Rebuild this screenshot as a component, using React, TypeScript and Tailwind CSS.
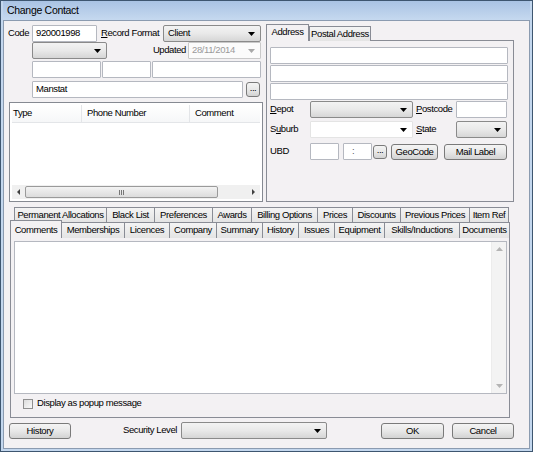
import React from "react";

type P = { className?: string; children?: React.ReactNode };

function Arrow({ color = "#000000" }: { color?: string }) {
  return (
    <svg width="7" height="4" viewBox="0 0 7 4" className="shrink-0">
      <path d="M0 0h7L3.5 4z" fill={color} />
    </svg>
  );
}

function TextBox({ className = "", children }: P) {
  return (
    <div className={`flex h-[17px] items-center rounded-[1px] border border-[#b5b8c0] bg-white ${className}`}>
      {children}
    </div>
  );
}

function Combo({ className = "", children }: P) {
  return (
    <div
      className={`flex h-[17px] items-center justify-between rounded-[2px] border border-[#8a8a8a] bg-linear-to-b from-[#f3f3f3] via-[#e9e9e9] to-[#d6d6d6] pl-[4px] pr-[5px] ${className}`}
    >
      <span>{children}</span>
      <Arrow />
    </div>
  );
}

function Btn({ className = "", children }: P) {
  return (
    <div
      className={`flex items-center justify-center rounded-[3px] border border-[#7a7a7a] bg-linear-to-b from-[#f4f4f4] via-[#e8e8e8] to-[#d3d3d3] leading-none ${className}`}
    >
      {children}
    </div>
  );
}

function Tab({ className = "", children }: P) {
  return (
    <div
      className={`flex shrink-0 items-center justify-center border-t border-l border-[#898c95] bg-linear-to-b from-[#f4f4f4] to-[#e4e4e4] ${className}`}
    >
      {children}
    </div>
  );
}

export default function App() {
  return (
    <div className="flex h-[452px] w-[533px] flex-col whitespace-nowrap border border-[#3e5670] bg-[#c3d7ee] px-[2px] pb-[2px] font-['Liberation_Sans',Arial,sans-serif] text-[9.5px] tracking-[-0.4px] text-black">
      {/* title bar */}
      <div className="flex h-[19px] items-center bg-linear-to-b from-[#a9c3e4] to-[#c6d9ef] pl-[4px] text-[10.5px] tracking-[-0.3px]">
        Change Contact
      </div>

      <div className="flex flex-1 flex-col border border-[#8b9bb0] bg-[#f3f1f3] px-[4px] pt-[3px]">
        {/* top section */}
        <div className="flex">
          {/* left column */}
          <div className="flex w-[255px] flex-col pt-[1px]">
            <div className="flex h-[17px] items-center">
              <span className="w-[24px]">Code</span>
              <TextBox className="w-[65px] pl-[3px]">920001998</TextBox>
              <span className="ml-[4px] w-[62px]">
                <span className="underline">R</span>ecord Format
              </span>
              <Combo className="w-[98px]">Client</Combo>
            </div>

            <div className="flex h-[17px] w-[253px] items-center">
              <Combo className="ml-[24px] w-[75px]" />
              <span className="ml-auto mr-[2px]">Updated</span>
              <div className="flex h-[17px] w-[73px] items-center justify-between rounded-[1px] border border-[#c9c9c9] bg-[#fbfbfb] pl-[3px] pr-[5px] text-[#9a9a9a]">
                <span>28/11/2014</span>
                <Arrow color="#a8a8a8" />
              </div>
            </div>

            <div className="mt-[2px] flex h-[17px]">
              <TextBox className="ml-[24px] w-[69px]" />
              <TextBox className="ml-[1px] w-[49px]" />
              <TextBox className="ml-[1px] w-[109px]" />
            </div>

            <div className="mt-[3px] flex h-[17px] items-center">
              <TextBox className="ml-[24px] w-[211px] pl-[3px]">Manstat</TextBox>
              <Btn className="ml-[3px] h-[15px] w-[14px] pb-[3px]">...</Btn>
            </div>

            {/* phone list */}
            <div className="mt-[4px] ml-[1px] flex h-[100px] w-[254px] flex-col border border-[#868a92] bg-white p-[2px]">
              <div className="flex h-[18px] border-b border-[#e3e5e8] bg-linear-to-b from-white to-[#f6f7f8]">
                <div className="flex w-[70px] items-center border-r border-[#e3e5e8] pl-[1px]">Type</div>
                <div className="flex w-[108px] items-center border-r border-[#e3e5e8] pl-[5px]">Phone Number</div>
                <div className="flex w-[70px] items-center pl-[5px]">Comment</div>
              </div>
              <div className="flex-1" />
              <div className="flex h-[14px] items-center bg-[#f0f0f0]">
                <div className="flex w-[13px] justify-center">
                  <svg width="3" height="6" viewBox="0 0 3 6">
                    <path d="M3 0v6L0 3z" fill="#404040" />
                  </svg>
                </div>
                <div className="flex h-[12px] w-[193px] items-center justify-center rounded-[2px] border border-[#9a9a9a] bg-linear-to-b from-[#f3f3f3] to-[#dcdcdc]">
                  <div className="flex gap-[1px]">
                    <div className="h-[5px] w-[1px] bg-[#777]" />
                    <div className="h-[5px] w-[1px] bg-[#777]" />
                    <div className="h-[5px] w-[1px] bg-[#777]" />
                  </div>
                </div>
                <div className="flex-1" />
                <div className="flex w-[13px] justify-center">
                  <svg width="3" height="6" viewBox="0 0 3 6">
                    <path d="M0 0v6L3 3z" fill="#404040" />
                  </svg>
                </div>
              </div>
            </div>
          </div>

          {/* right column : address tabs */}
          <div className="ml-[3px] flex w-[248px] flex-col">
            <div className="relative z-10 flex h-[17px] items-end">
              <div className="flex h-[17px] w-[43px] items-center justify-center border-x border-t border-[#898c95] bg-[#f3f1f3] pb-[1px]">
                Address
              </div>
              <Tab className="h-[15px] w-[62px] border-r">Postal Address</Tab>
            </div>
            <div className="-mt-[1px] flex h-[162px] flex-col border border-[#898c95] px-[3px] pt-[6px]">
              <TextBox className="w-[238px]" />
              <TextBox className="mt-[1px] w-[238px]" />
              <TextBox className="mt-[1px] w-[238px]" />

              <div className="mt-[1px] flex h-[17px] items-center">
                <span className="w-[40px]">
                  <span className="underline">D</span>epot
                </span>
                <Combo className="w-[103px]" />
                <span className="ml-[3px] w-[40px]">
                  <span className="underline">P</span>ostcode
                </span>
                <TextBox className="w-[51px]" />
              </div>

              <div className="mt-[3px] flex h-[17px] items-center">
                <span className="w-[40px]">
                  S<span className="underline">u</span>burb
                </span>
                <TextBox className="w-[103px] justify-end border-[#e4e4e4] pr-[5px]">
                  <Arrow />
                </TextBox>
                <span className="ml-[3px] w-[40px]">
                  <span className="underline">S</span>tate
                </span>
                <Combo className="w-[51px]" />
              </div>

              <div className="mt-[5px] flex h-[17px] items-center">
                <span className="w-[40px]">UBD</span>
                <TextBox className="w-[29px]" />
                <TextBox className="ml-[4px] w-[29px] pl-[8px] text-[#555]">:</TextBox>
                <Btn className="ml-[1px] h-[14px] w-[14px] pb-[3px]">...</Btn>
                <Btn className="ml-[4px] h-[16px] w-[47px]">GeoCode</Btn>
                <Btn className="ml-[6px] h-[16px] w-[63px]">Mail Label</Btn>
              </div>
            </div>
          </div>
        </div>

        {/* bottom tab control */}
        <div className="mt-[5px] ml-[2px] flex w-[500px] flex-col">
          <div className="flex h-[15px] pl-[4px]">
            <Tab className="w-[92px]">Permanent Allocations</Tab>
            <Tab className="w-[48px]">Black List</Tab>
            <Tab className="w-[58px]">Preferences</Tab>
            <Tab className="w-[39px]">Awards</Tab>
            <Tab className="w-[66px]">Billing Options</Tab>
            <Tab className="w-[35px]">Prices</Tab>
            <Tab className="w-[48px]">Discounts</Tab>
            <Tab className="w-[69px]">Previous Prices</Tab>
            <Tab className="w-[40px] border-r">Item Ref</Tab>
          </div>
          <div className="relative z-10 flex h-[16px] items-end">
            <div className="flex h-[18px] w-[52px] shrink-0 items-start justify-center border-x border-t border-[#898c95] bg-[#f3f1f3] pt-[2px]">
              Comments
            </div>
            <Tab className="h-[16px] w-[62px] border-l-0">Memberships</Tab>
            <Tab className="h-[16px] w-[45px]">Licences</Tab>
            <Tab className="h-[16px] w-[47px]">Company</Tab>
            <Tab className="h-[16px] w-[46px]">Summary</Tab>
            <Tab className="h-[16px] w-[36px]">History</Tab>
            <Tab className="h-[16px] w-[36px]">Issues</Tab>
            <Tab className="h-[16px] w-[50px]">Equipment</Tab>
            <Tab className="h-[16px] w-[75px]">Skills/Inductions</Tab>
            <Tab className="h-[16px] w-[51px] border-r">Documents</Tab>
          </div>
          <div className="-mt-[1px] flex h-[181px] flex-col border border-[#898c95] px-[3px] pt-[3px]">
            <div className="flex h-[153px] w-[493px] justify-end border border-[#b5b8c0] bg-white">
              <div className="flex w-[15px] flex-col items-center justify-between border-l border-[#ececec] bg-[#f3f3f3] py-[5px]">
                <svg width="7" height="4" viewBox="0 0 7 4">
                  <path d="M0 4h7L3.5 0z" fill="#b4b4b4" />
                </svg>
                <svg width="7" height="4" viewBox="0 0 7 4">
                  <path d="M0 0h7L3.5 4z" fill="#b4b4b4" />
                </svg>
              </div>
            </div>
            <div className="mt-[4px] flex h-[11px] items-center pl-[9px]">
              <div className="h-[10px] w-[10px] border border-[#8f8f8f] bg-linear-to-br from-[#dcdcdc] to-[#fafafa]" />
              <span className="ml-[4px]">Display as popup message</span>
            </div>
          </div>
        </div>

        {/* bottom buttons */}
        <div className="mt-[4px] flex h-[17px] items-center">
          <Btn className="ml-[1px] h-[16px] w-[62px]">History</Btn>
          <span className="ml-[52px] w-[58px]">Security Level</span>
          <Combo className="w-[146px]" />
          <Btn className="ml-[54px] h-[16px] w-[63px]">OK</Btn>
          <Btn className="ml-[8px] h-[16px] w-[62px]">Cancel</Btn>
        </div>
      </div>
    </div>
  );
}
